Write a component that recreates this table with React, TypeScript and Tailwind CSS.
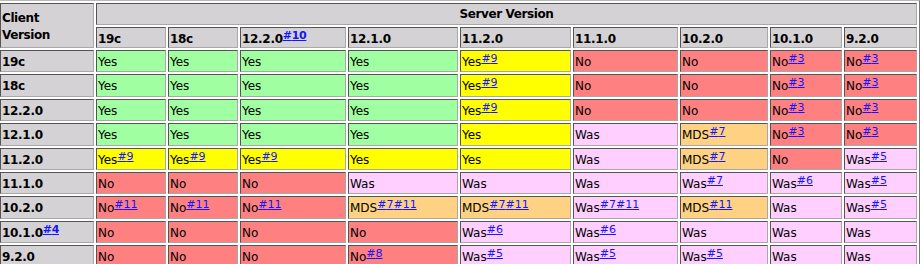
const COLS = ["19c", "18c", "12.2.0#10", "12.1.0", "11.2.0", "11.1.0", "10.2.0", "10.1.0", "9.2.0"];

const WIDTHS = [
  "w-[94px]", "w-[70px]", "w-[70px]", "w-[106px]", "w-[110px]",
  "w-[111px]", "w-[105px]", "w-[88px]", "w-[72px]", "w-[73px]",
];

// cell text "Word#note#note:colour"
const ROWS: [string, string[]][] = [
  ["19c", ["Yes:g", "Yes:g", "Yes:g", "Yes:g", "Yes#9:y", "No:r", "No:r", "No#3:r", "No#3:r"]],
  ["18c", ["Yes:g", "Yes:g", "Yes:g", "Yes:g", "Yes#9:y", "No:r", "No:r", "No#3:r", "No#3:r"]],
  ["12.2.0", ["Yes:g", "Yes:g", "Yes:g", "Yes:g", "Yes#9:y", "No:r", "No:r", "No#3:r", "No#3:r"]],
  ["12.1.0", ["Yes:g", "Yes:g", "Yes:g", "Yes:g", "Yes:y", "Was:p", "MDS#7:o", "No#3:r", "No#3:r"]],
  ["11.2.0", ["Yes#9:y", "Yes#9:y", "Yes#9:y", "Yes:y", "Yes:y", "Was:p", "MDS#7:o", "No:r", "Was#5:p"]],
  ["11.1.0", ["No:r", "No:r", "No:r", "Was:p", "Was:p", "Was:p", "Was#7:p", "Was#6:p", "Was#5:p"]],
  ["10.2.0", ["No#11:r", "No#11:r", "No#11:r", "MDS#7#11:o", "MDS#7#11:o", "Was#7#11:p", "MDS#11:o", "Was:p", "Was#5:p"]],
  ["10.1.0#4", ["No:r", "No:r", "No:r", "No:r", "Was#6:p", "Was#6:p", "Was:p", "Was:p", "Was:p"]],
  ["9.2.0", ["No:r", "No:r", "No:r", "No#8:r", "Was#5:p", "Was#5:p", "Was#5:p", "Was:p", "Was:p"]],
];

const BG: Record<string, string> = {
  g: "bg-[#a0ffa0]",
  y: "bg-[#ffff00]",
  r: "bg-[#ff8080]",
  p: "bg-[#ffd0ff]",
  o: "bg-[#ffd283]",
  h: "bg-[#d4d2d4]",
};

const cellBase =
  "border border-t-[#555555] border-l-[#555555] border-b-[#a8a8a8] border-r-[#a8a8a8] px-px pt-[4px] pb-0 align-top text-left whitespace-nowrap overflow-hidden leading-[15px]";

const Label = ({ value }: { value: string }) => {
  const [word, ...notes] = value.split("#");
  return (
    <>
      {word}
      {notes.length > 0 && (
        <sup className="relative top-[-4px] text-[11px] leading-none">
          {notes.map(n => (
            <a key={n} href={`#note${n}`} className="text-[#1414ff] underline">
              #{n}
            </a>
          ))}
        </sup>
      )}
    </>
  );
};

export default function App() {
  return (
    <div className="bg-white min-h-screen overflow-hidden font-['DejaVu_Sans',sans-serif] text-[12px] text-black">
      <table className="-ml-[3px] w-[923px] table-fixed border-separate border-spacing-[2px] border border-t-[#b8b8b8] border-l-[#b8b8b8] border-r-[#777777] border-b-[#777777]">
        <colgroup>
          {WIDTHS.map((w, i) => (
            <col key={i} className={w} />
          ))}
        </colgroup>
        <thead>
          <tr className="h-[21.5px]">
            <th
              rowSpan={2}
              className={`${cellBase} ${BG.h} !align-middle !pt-[2px] !leading-[17px] whitespace-normal font-bold tracking-[-0.4px]`}
            >
              Client
              <br />
              Version
            </th>
            <th colSpan={9} className={`${cellBase} ${BG.h} !text-center !pt-[3px] font-bold tracking-[-0.4px]`}>
              Server Version
            </th>
          </tr>
          <tr className="h-[21.5px]">
            {COLS.map(c => (
              <th key={c} className={`${cellBase} ${BG.h} font-bold tracking-[-0.3px]`}>
                <Label value={c} />
              </th>
            ))}
          </tr>
        </thead>
        <tbody>
          {ROWS.map(([client, cells]) => (
            <tr key={client} className="h-[22.4px]">
              <th className={`${cellBase} ${BG.h} font-bold tracking-[-0.3px]`}>
                <Label value={client} />
              </th>
              {cells.map((cell, i) => {
                const [text, colour] = cell.split(":");
                return (
                  <td key={i} className={`${cellBase} ${BG[colour]}`}>
                    <Label value={text} />
                  </td>
                );
              })}
            </tr>
          ))}
        </tbody>
      </table>
    </div>
  );
}
